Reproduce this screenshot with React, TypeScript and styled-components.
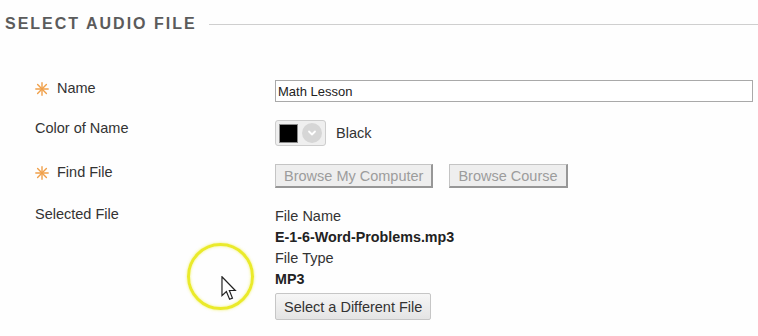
import React from 'react';
import styled, { createGlobalStyle } from 'styled-components';

const GlobalStyle = createGlobalStyle`
  html, body {
    margin: 0;
    padding: 0;
    background: #fefefe;
  }
  body {
    font-family: "Liberation Sans", Arial, sans-serif;
    color: #333;
  }
`;

const Page = styled.div`
  position: relative;
  width: 758px;
  height: 336px;
  overflow: hidden;
  padding-top: 14px;
  box-sizing: border-box;
`;

const SectionHeader = styled.div`
  display: flex;
  align-items: center;
  padding-left: 5px;
  height: 20px;
`;

const SectionTitle = styled.h2`
  margin: 0;
  font-size: 16px;
  line-height: 20px;
  font-weight: bold;
  letter-spacing: 2px;
  color: #5b5b5b;
  white-space: nowrap;
`;

const Rule = styled.div`
  flex: 1;
  height: 1px;
  background: #cfcfcf;
  margin-left: 12px;
`;

const Form = styled.div`
  display: grid;
  grid-template-columns: 240px 1fr;
  row-gap: 18px;
  margin-top: 46px;
  padding: 0 5px 0 35px;
`;

const Label = styled.div`
  align-self: start;
  display: flex;
  align-items: center;
  font-size: 14.5px;
  line-height: 17px;
  color: #333;
`;

const Field = styled.div<{ $center?: boolean }>`
  display: flex;
  flex-direction: ${p => (p.$center ? 'row' : 'column')};
  align-items: ${p => (p.$center ? 'center' : 'flex-start')};
`;

const TextInput = styled.input`
  width: 100%;
  height: 22px;
  box-sizing: border-box;
  border: 1px solid #a9a9a9;
  padding: 0 2px;
  font-family: "Liberation Sans", Arial, sans-serif;
  font-size: 13px;
  color: #222;
  background: #fff;
  outline: none;
`;

const ColorPicker = styled.div`
  display: inline-flex;
  align-items: center;
  gap: 4px;
  height: 26px;
  box-sizing: border-box;
  padding: 0 3px;
  background: #efefef;
  border: 1px solid #cdcdcd;
  border-radius: 3px;
`;

const Swatch = styled.div<{ $color: string }>`
  width: 19px;
  height: 19px;
  box-sizing: border-box;
  border: 1px solid #8a8a8a;
  background: ${p => p.$color};
`;

const ChevronCircle = styled.div`
  width: 20px;
  height: 20px;
  border-radius: 50%;
  background: #d6d6d6;
  display: flex;
  align-items: center;
  justify-content: center;
`;

const ColorName = styled.span`
  font-size: 14.5px;
  margin-left: 10px;
  color: #333;
`;

const ButtonRow = styled.div`
  display: flex;
  gap: 16px;
`;

const BrowseButton = styled.button`
  height: 24px;
  padding: 0 8px;
  font-family: "Liberation Sans", Arial, sans-serif;
  font-size: 14.5px;
  color: #9c9c9c;
  background: #eeeeee;
  border: 1px solid #c4c4c4;
  border-right: 2px solid #979797;
  border-bottom: 2px solid #979797;
  cursor: default;
`;

const InfoLabel = styled.div`
  font-size: 14.5px;
  line-height: 21px;
  color: #333;
`;

const InfoValue = styled.div`
  font-size: 14.3px;
  line-height: 21px;
  font-weight: bold;
  color: #222;
`;

const PlainButton = styled.button`
  margin-top: 3px;
  height: 27px;
  padding: 0 8px;
  font-family: "Liberation Sans", Arial, sans-serif;
  font-size: 14.5px;
  color: #333;
  background: linear-gradient(#f6f6f6, #e4e4e4);
  border: 1px solid #c6c6c6;
  border-radius: 2px;
`;

const Highlight = styled.div`
  position: absolute;
  left: 187px;
  top: 243px;
  width: 67px;
  height: 67px;
  box-sizing: border-box;
  border-radius: 50%;
  border: 3px solid #eaea2a;
  box-shadow: 0 0 3px rgba(235, 235, 40, 0.7), inset 0 0 3px rgba(235, 235, 40, 0.6);
`;

const Pointer = styled.svg`
  position: absolute;
  left: 221px;
  top: 276px;
`;

const Required = styled.svg`
  margin-right: 8px;
  flex: none;
`;

const RequiredMark = () => (
  <Required width="14" height="14" viewBox="0 0 14 14">
    <g stroke="#f0a04a" strokeWidth="1.4" strokeLinecap="round">
      <line x1="7" y1="0.8" x2="7" y2="13.2" />
      <line x1="0.8" y1="7" x2="13.2" y2="7" />
      <line x1="2.6" y1="2.6" x2="11.4" y2="11.4" />
      <line x1="11.4" y1="2.6" x2="2.6" y2="11.4" />
    </g>
  </Required>
);

export default function App() {
  return (
    <Page>
      <GlobalStyle />
      <SectionHeader>
        <SectionTitle>SELECT AUDIO FILE</SectionTitle>
        <Rule />
      </SectionHeader>

      <Form>
        <Label>
          <RequiredMark />
          Name
        </Label>
        <Field>
          <TextInput defaultValue="Math Lesson" />
        </Field>

        <Label>Color of Name</Label>
        <Field $center>
          <ColorPicker>
            <Swatch $color="#000" />
            <ChevronCircle>
              <svg width="10" height="10" viewBox="0 0 10 10">
                <polyline points="2,3.5 5,6.5 8,3.5" fill="none" stroke="#fff" strokeWidth="1.8" strokeLinecap="round" strokeLinejoin="round" />
              </svg>
            </ChevronCircle>
          </ColorPicker>
          <ColorName>Black</ColorName>
        </Field>

        <Label>
          <RequiredMark />
          Find File
        </Label>
        <Field>
          <ButtonRow>
            <BrowseButton disabled>Browse My Computer</BrowseButton>
            <BrowseButton disabled>Browse Course</BrowseButton>
          </ButtonRow>
        </Field>

        <Label>Selected File</Label>
        <Field>
          <InfoLabel>File Name</InfoLabel>
          <InfoValue>E-1-6-Word-Problems.mp3</InfoValue>
          <InfoLabel>File Type</InfoLabel>
          <InfoValue>MP3</InfoValue>
          <PlainButton>Select a Different File</PlainButton>
        </Field>
      </Form>

      <Highlight />
      <Pointer width="16" height="25" viewBox="0 0 13 21">
        <path d="M0.6 0.6 L0.6 16.5 L4.3 13 L7 19.6 L9.4 18.6 L6.8 12.2 L11.8 12.2 Z" fill="#fff" stroke="#222" strokeWidth="1" strokeLinejoin="miter" />
      </Pointer>
    </Page>
  );
}
